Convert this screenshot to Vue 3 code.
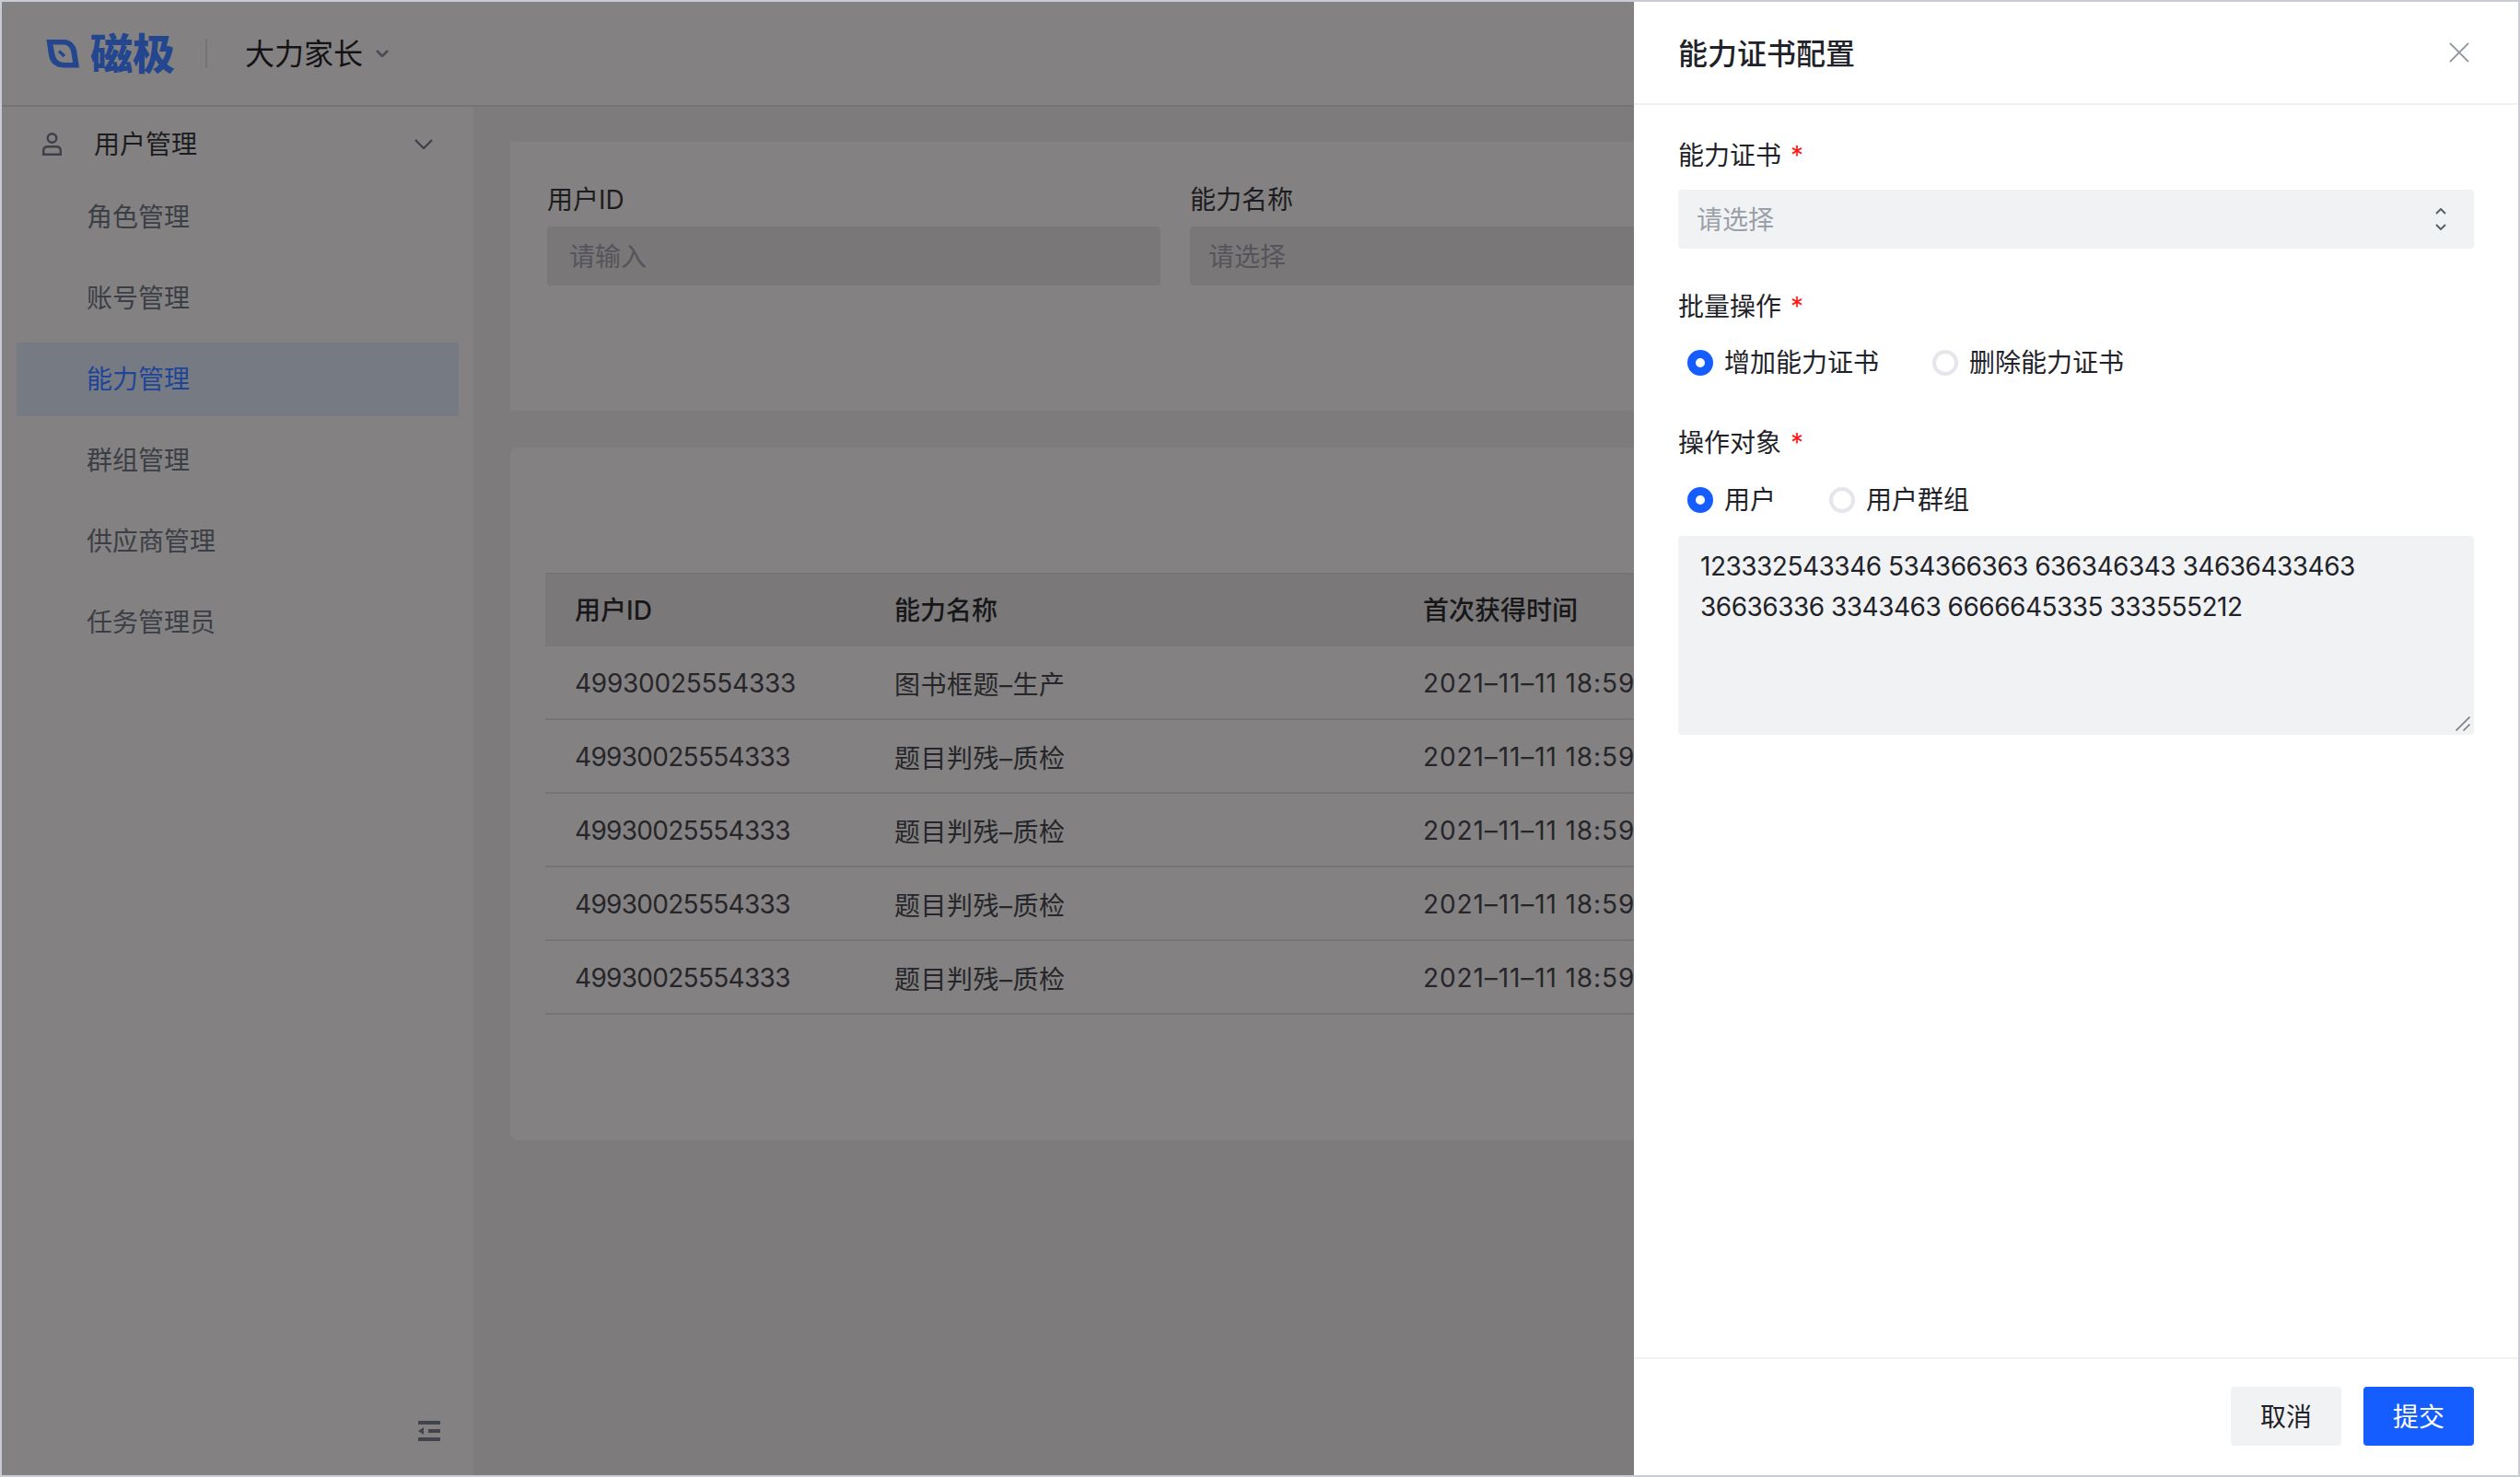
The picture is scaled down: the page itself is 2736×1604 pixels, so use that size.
<script setup>
const menu = [
  { name: '角色管理' },
  { name: '账号管理' },
  { name: '能力管理', active: true },
  { name: '群组管理' },
  { name: '供应商管理' },
  { name: '任务管理员' }
]

const rows = [
  { id: '49930025554333', ability: '图书框题–生产', time: '2021–11–11 18:59:33' },
  { id: '49930025554333', ability: '题目判残–质检', time: '2021–11–11 18:59:33' },
  { id: '49930025554333', ability: '题目判残–质检', time: '2021–11–11 18:59:33' },
  { id: '49930025554333', ability: '题目判残–质检', time: '2021–11–11 18:59:33' },
  { id: '49930025554333', ability: '题目判残–质检', time: '2021–11–11 18:59:33' }
]
</script>

<template>
  <div class="app">
    <header class="topbar">
      <svg class="logo-icon" viewBox="0 0 36 31">
        <path
          fill-rule="evenodd"
          d="M0.5 0H19C28 0 33 7 33.5 14L36 30.5H20C9 30.5 4 24 3 17ZM7.5 5.5L9.5 16C10.5 21 14 25 20 25H29.2L27.5 15C27 10 24.5 5.5 19 5.5Z"
        />
        <path class="logo-dash" d="M14 12.5L20 18" />
      </svg>
      <span class="logo-text">磁极</span>
      <span class="topbar-divider"></span>
      <span class="org-name">大力家长</span>
      <svg class="org-arrow" viewBox="0 0 14 8">
        <path d="M1 1L7 7L13 1" />
      </svg>
    </header>

    <div class="layout">
      <aside class="sidebar">
        <div class="menu-parent">
          <svg class="user-icon" viewBox="0 0 21 25">
            <circle cx="10.5" cy="6" r="4.8" />
            <path d="M1.2 23.7V19.5C1.2 16.5 3.2 15.2 6 15.2H15C17.8 15.2 19.8 16.5 19.8 19.5V23.7Z" />
          </svg>
          <span class="menu-parent-name">用户管理</span>
          <svg class="menu-arrow" viewBox="0 0 20 11">
            <path d="M1 1L10 10L19 1" />
          </svg>
        </div>
        <ul class="menu-list">
          <li v-for="item in menu" :key="item.name" :class="{ active: item.active }">
            {{ item.name }}
          </li>
        </ul>
        <div class="sidebar-footer">
          <svg class="collapse-icon" viewBox="0 0 24 22">
            <rect x="0" y="0" width="24" height="4" />
            <rect x="11" y="9" width="13" height="4" />
            <rect x="0" y="18" width="24" height="4" />
            <path d="M0 11L6 7V15Z" />
          </svg>
        </div>
      </aside>

      <main class="content">
        <section class="card filter-card">
          <div class="field">
            <label>用户ID</label>
            <div class="fake-input">请输入</div>
          </div>
          <div class="field">
            <label>能力名称</label>
            <div class="fake-input select-input">请选择</div>
          </div>
        </section>

        <section class="card table-card">
          <table>
            <thead>
              <tr>
                <th class="col-id">用户ID</th>
                <th class="col-ability">能力名称</th>
                <th>首次获得时间</th>
              </tr>
            </thead>
            <tbody>
              <tr v-for="(row, i) in rows" :key="i">
                <td class="cell-id">{{ row.id }}</td>
                <td class="cell-ability">{{ row.ability }}</td>
                <td class="cell-time">{{ row.time }}</td>
              </tr>
            </tbody>
          </table>
        </section>
      </main>
    </div>

    <aside class="drawer">
      <div class="drawer-header">
        <h2>能力证书配置</h2>
        <svg class="close-icon" viewBox="0 0 24 24">
          <path d="M1 1L23 23M23 1L1 23" />
        </svg>
      </div>

      <div class="drawer-body">
        <div class="form-label label-cert">能力证书 <span class="required">*</span></div>
        <div class="select">
          <span>请选择</span>
          <svg class="select-arrows" viewBox="0 0 12 24">
            <path d="M1 6L6 1L11 6M1 18L6 23L11 18" />
          </svg>
        </div>

        <div class="form-label label-batch">批量操作 <span class="required">*</span></div>
        <div class="radio-group group-batch">
          <div class="radio"><i class="dot on"></i>增加能力证书</div>
          <div class="radio"><i class="dot"></i>删除能力证书</div>
        </div>

        <div class="form-label label-target">操作对象 <span class="required">*</span></div>
        <div class="radio-group group-target">
          <div class="radio"><i class="dot on"></i>用户</div>
          <div class="radio"><i class="dot"></i>用户群组</div>
        </div>

        <div class="id-wrap">
          <textarea class="id-input" spellcheck="false">123332543346 534366363 636346343 34636433463 36636336 3343463 6666645335 333555212</textarea>
          <svg class="resize-handle" viewBox="0 0 16 16">
            <path d="M0.5 15.5L15.5 0.5M8.5 15.5L15.5 8.5" />
          </svg>
        </div>
      </div>

      <div class="drawer-footer">
        <button class="btn">取消</button>
        <button class="btn primary">提交</button>
      </div>
    </aside>
  </div>
</template>

<style scoped>
.app {
  position: relative;
  width: 2736px;
  height: 1604px;
  box-sizing: border-box;
  border: 2px solid #c9cdd3;
  background: #7d7b7b;
  display: flex;
  flex-direction: column;
  overflow: hidden;
  font-family: Inter, "Noto Sans CJK SC", sans-serif;
  font-size: 28px;
  color: #1d1d20;
}

.topbar {
  height: 114px;
  box-sizing: border-box;
  flex: none;
  display: flex;
  align-items: center;
  padding-left: 48px;
  background: #838181;
  border-bottom: 2px solid #757373;
}

.logo-icon {
  width: 36px;
  height: 31px;
  fill: #24468f;
}

.logo-dash {
  fill: none;
  stroke: #24468f;
  stroke-width: 3.4;
}

.logo-text {
  margin-left: 12px;
  font-size: 46px;
  line-height: 50px;
  font-weight: 900;
  color: #24468f;
}

.topbar-divider {
  width: 2px;
  height: 32px;
  margin-left: 33px;
  background: #767474;
}

.org-name {
  margin-left: 41px;
  padding-top: 2px;
  font-size: 32px;
  line-height: 44px;
  color: #131316;
}

.org-arrow {
  width: 14px;
  height: 8px;
  margin-left: 14px;
  fill: none;
  stroke: #4a4d55;
  stroke-width: 2.8;
}

.layout {
  flex: 1;
  display: flex;
  min-height: 0;
}

.sidebar {
  width: 512px;
  flex: none;
  display: flex;
  flex-direction: column;
  background: #838181;
}

.menu-parent {
  height: 80px;
  display: flex;
  align-items: center;
  padding-left: 44px;
  color: #1b1c20;
}

.user-icon {
  width: 21px;
  height: 25px;
  fill: none;
  stroke: #3d4048;
  stroke-width: 2.4;
}

.menu-parent-name {
  margin-left: 35px;
  margin-bottom: 3px;
}

.menu-arrow {
  width: 20px;
  height: 11px;
  margin-left: auto;
  margin-right: 44px;
  fill: none;
  stroke: #3d4048;
  stroke-width: 2.2;
}

.menu-list {
  list-style: none;
  margin: 0;
  padding: 0 16px;
  display: flex;
  flex-direction: column;
  gap: 8px;
}

.menu-list li {
  height: 80px;
  line-height: 81px;
  padding-left: 76px;
  color: #3c3e46;
}

.menu-list li.active {
  background: #767a83;
  color: #1f4598;
}

.sidebar-footer {
  margin-top: auto;
  display: flex;
  justify-content: flex-end;
  padding: 0 36px 37px 0;
}

.collapse-icon {
  width: 24px;
  height: 22px;
  fill: #42444c;
}

.content {
  flex: 1;
  min-width: 0;
  padding: 38px 40px;
  display: flex;
  flex-direction: column;
  gap: 40px;
}

.card {
  background: #838181;
  box-sizing: border-box;
}

.filter-card {
  height: 292px;
  padding: 42px 40px 0;
  display: flex;
  gap: 32px;
}

.field {
  width: 666px;
}

.field label {
  display: block;
  height: 40px;
  line-height: 42px;
  margin-bottom: 10px;
  color: #1d1d20;
}

.fake-input {
  height: 64px;
  line-height: 66px;
  padding-left: 24px;
  border-radius: 4px;
  background: #797777;
  color: #55545a;
}

.select-input {
  padding-left: 20px;
}

.table-card {
  height: 752px;
  padding: 136px 38px 0 38px;
  border-radius: 8px;
}

table {
  width: 100%;
  border-collapse: separate;
  border-spacing: 0;
  table-layout: fixed;
}

th,
td {
  height: 80px;
  box-sizing: border-box;
  padding: 0 0 0 32px;
  text-align: left;
  white-space: nowrap;
}

th {
  font-weight: 500;
  padding-bottom: 4px;
  background: #7a7878;
  border-top: 2px solid #757373;
  color: #17171a;
}

td {
  padding-top: 2px;
  border-bottom: 2px solid #767474;
  color: #26262a;
}

.col-id {
  width: 347px;
}

.col-ability {
  width: 574px;
}

.cell-id {
  letter-spacing: -0.7px;
}

tbody tr:first-child .cell-id {
  letter-spacing: -0.25px;
}

.cell-ability {
  letter-spacing: 0.5px;
}

.cell-time {
  letter-spacing: 0.9px;
}

.drawer {
  position: absolute;
  top: 0;
  right: 0;
  bottom: 0;
  width: 960px;
  display: flex;
  flex-direction: column;
  background: #fff;
  color: #1f2329;
}

.drawer-header {
  height: 112px;
  flex: none;
  box-sizing: border-box;
  display: flex;
  align-items: center;
  justify-content: space-between;
  padding: 0 52px 0 48px;
  border-bottom: 2px solid #f0f1f3;
}

.drawer-header h2 {
  margin: 0;
  padding-top: 3px;
  font-size: 32px;
  font-weight: 500;
  line-height: 44px;
}

.close-icon {
  width: 24px;
  height: 22px;
  fill: none;
  stroke: #8f959e;
  stroke-width: 2;
}

.drawer-body {
  flex: 1;
  padding: 0 48px;
}

.form-label {
  height: 40px;
  line-height: 40px;
}

.label-cert {
  margin-top: 35px;
}

.label-batch {
  margin-top: 43px;
}

.label-target {
  margin-top: 47px;
}

.required {
  color: #ff1a1a;
  margin-left: 2px;
}

.select {
  height: 64px;
  margin-top: 17px;
  padding: 0 30px 0 20px;
  display: flex;
  align-items: center;
  justify-content: space-between;
  border-radius: 4px;
  background: #f1f2f4;
  color: #9aa0a8;
}

.select span {
  padding-bottom: 3px;
}

.select-arrows {
  width: 12px;
  height: 24px;
  fill: none;
  stroke: #5a6068;
  stroke-width: 2;
}

.radio-group {
  height: 40px;
  padding-left: 10px;
  display: flex;
  align-items: center;
  gap: 58px;
}

.group-batch {
  margin-top: 21px;
}

.group-target {
  margin-top: 22px;
}

.radio {
  display: flex;
  align-items: center;
  gap: 12px;
  line-height: 40px;
}

.dot {
  width: 28px;
  height: 28px;
  box-sizing: border-box;
  border: 4px solid #e4e6ec;
  border-radius: 50%;
}

.dot.on {
  border: 9px solid #165dff;
}

.id-wrap {
  position: relative;
  margin-top: 19px;
}

.id-input {
  display: block;
  width: 100%;
  height: 216px;
  box-sizing: border-box;
  padding: 11px 24px;
  border: none;
  outline: none;
  resize: none;
  border-radius: 4px;
  background: #f1f2f4;
  font-family: inherit;
  font-size: 28px;
  line-height: 44px;
  color: #1f2329;
  letter-spacing: -0.5px;
}

.resize-handle {
  position: absolute;
  right: 4px;
  bottom: 4px;
  width: 16px;
  height: 16px;
  fill: none;
  stroke: #7a808a;
  stroke-width: 1.6;
}

.drawer-footer {
  height: 128px;
  flex: none;
  box-sizing: border-box;
  display: flex;
  justify-content: flex-end;
  gap: 24px;
  padding: 30px 48px 0 0;
  border-top: 2px solid #f0f1f3;
}

.btn {
  width: 120px;
  height: 64px;
  padding: 0 0 2px;
  border: none;
  border-radius: 4px;
  background: #f1f2f4;
  font-family: inherit;
  font-size: 28px;
  color: #1f2329;
}

.btn.primary {
  background: #165dff;
  color: #fff;
}
</style>

<style>
body {
  margin: 0;
}
</style>
